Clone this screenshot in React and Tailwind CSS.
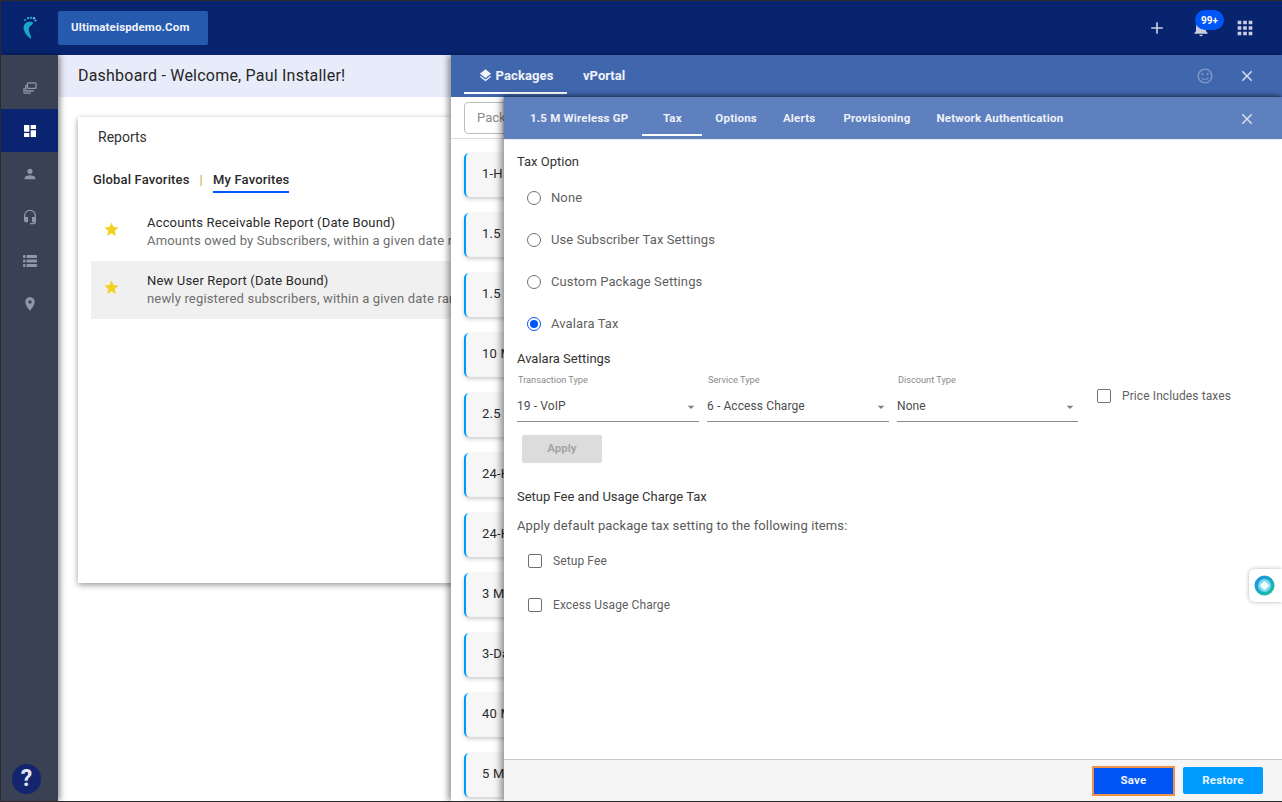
import React from "react";
import { MdDashboard, MdPerson, MdHeadsetMic, MdLocationOn, MdAdd, MdApps, MdNotifications, MdLayers, MdClose, MdOutlineSentimentSatisfiedAlt, MdStar, MdArrowDropDown } from "react-icons/md";

const ff = { fontFamily: "Roboto, sans-serif" };

function Logo() {
  return (
    <svg width="16" height="24" viewBox="0 0 16 24">
      <path d="M6 6 C2 7 1 11 2 14 C3 18 6 21 9 23 C10 20 6 16 7 12 C8 9 11 9 11 7 C11 5.500 8 5.500 6 6 Z" fill="#1aa5c9" />
      <circle cx="3" cy="4" r="1.100" fill="#1aa5c9" />
      <circle cx="6" cy="2.200" r="1.100" fill="#2fb8d8" />
      <circle cx="9" cy="1.800" r="1.100" fill="#2fb8d8" />
      <circle cx="12" cy="2.200" r="1.200" fill="#4fc3e0" />
      <circle cx="13.500" cy="4.500" r="1" fill="#4fc3e0" />
    </svg>
  );
}

function CardsIcon() {
  return (
    <svg width="14" height="12" viewBox="0 0 16 14" fill="none" stroke="#8f97ab" strokeWidth="1.500">
      <rect x="5" y="1" width="10" height="6.500" rx="1" />
      <path d="M5 4 H4 A1 1 0 0 0 3 5 V9.500 A1 1 0 0 0 4 10.500 H11 A1 1 0 0 0 12 9.500" />
      <path d="M1 7 V12 A1 1 0 0 0 2 13 H9" />
    </svg>
  );
}

function ListIcon() {
  return (
    <svg width="14" height="12" viewBox="0 0 14 12" fill="#8f97ab">
      <rect x="0" y="0" width="2.500" height="3" rx="0.800" />
      <rect x="3.500" y="0" width="10.500" height="3" rx="0.800" />
      <rect x="0" y="4.500" width="2.500" height="3" rx="0.800" />
      <rect x="3.500" y="4.500" width="10.500" height="3" rx="0.800" />
      <rect x="0" y="9" width="2.500" height="3" rx="0.800" />
      <rect x="3.500" y="9" width="10.500" height="3" rx="0.800" />
    </svg>
  );
}

function SideItem({ active, children, low }) {
  return (
    <div className={(active ? "h-[43px] flex items-center justify-center bg-[#0a2472]" : "h-[43px] flex items-center justify-center") + (low ? " pt-[2px]" : "")}>
      {children}
    </div>
  );
}

function Radio({ label, checked }) {
  return (
    <div className="h-[42px] flex items-center pl-[10px]">
      <span className={checked ? "w-[14px] h-[14px] rounded-full border-[1.5px] border-[#0055f5] flex items-center justify-center" : "w-[14px] h-[14px] rounded-full border-[1.5px] border-[#6f6f6f]"}>
        {checked && <span className="w-[8px] h-[8px] rounded-full bg-[#0055f5]" />}
      </span>
      <span className="ml-[10px] text-[13px] tracking-[0.1px] text-[#5f5f5f]">{label}</span>
    </div>
  );
}

function Select({ label, value, width }) {
  return (
    <div className="flex flex-col" style={{ width }}>
      <div className="text-[9.2px] leading-[12px] text-[#8a8a8a] pl-px">{label}</div>
      <div className="mt-[4px] h-[32px] flex items-center justify-between border-b border-[#8c8c8c]">
        <span className="text-[12px] tracking-[0.1px] text-[#4d4d4d]">{value}</span>
        <MdArrowDropDown className="text-[#808080] mt-[2px]" size={16} />
      </div>
    </div>
  );
}

function Check({ label, className }) {
  return (
    <div className={"flex items-center " + (className || "")}>
      <span className="w-[14px] h-[14px] rounded-[2px] border-[1.5px] border-[#6f6f6f] shrink-0" />
      <span className="ml-[11px] text-[12px] tracking-[0.1px] text-[#5f5f5f]">{label}</span>
    </div>
  );
}

const packages = ["1-H", "1.5", "1.5", "10 M", "2.5", "24-H", "24-H", "3 M", "3-Da", "40 M", "5 M"];

function Report({ title, sub, hover }) {
  return (
    <div className={hover ? "h-[58px] flex items-center bg-[#f0f0f0] w-[400px] overflow-hidden" : "h-[58px] flex items-center w-[400px] overflow-hidden"}>
      <MdStar className="text-[#f2d21f] ml-[12px] mb-[4px] shrink-0" size={17} />
      <div className="ml-[27px] whitespace-nowrap">
        <div className="text-[13px] leading-[18px] tracking-[0.17px] text-[#2a2a2a]">{title}</div>
        <div className="text-[13px] leading-[18px] tracking-[0.17px] text-[#6e6e6e]">{sub}</div>
      </div>
    </div>
  );
}

export default function App() {
  return (
    <div style={ff} className="relative w-[1282px] h-[802px] overflow-hidden bg-white border-t border-l border-r-0 border-b border-[#2b2b2b] flex flex-col">
      <header className="h-[54px] shrink-0 bg-[#08246f] flex items-center">
        <div className="w-[57px] flex justify-center"><Logo /></div>
        <div className="w-[150px] h-[34px] rounded-[2px] bg-[#255aaf] flex items-center pl-[13px] text-[11.500px] font-bold tracking-[0.15px] text-[#f0f3fa]">Ultimateispdemo.Com</div>
        <div className="ml-auto flex items-center">
          <MdAdd className="text-[#c9cede] mr-[24px]" size={20} />
          <div className="relative w-[20px] h-[20px] mr-[23px]">
            <MdNotifications className="text-[#c9cede]" size={20} />
            <span className="absolute left-[4px] top-[-8px] w-[29px] h-[20px] rounded-full bg-[#0055f5] text-white text-[10px] font-bold flex items-center justify-center">99+</span>
          </div>
          <MdApps className="text-[#c9cede] mr-[26px]" size={22} />
        </div>
      </header>
      <div className="flex flex-1 min-h-0">
        <aside className="relative w-[57px] shrink-0 bg-[#3a4155] pt-[11px] shadow-[2px_0_6px_rgba(0,0,0,0.45)] z-10">
          <SideItem><CardsIcon /></SideItem>
          <SideItem active><MdDashboard className="text-white" size={16} /></SideItem>
          <SideItem><MdPerson className="text-[#8f97ab]" size={16} /></SideItem>
          <SideItem><MdHeadsetMic className="text-[#8f97ab]" size={16} /></SideItem>
          <SideItem low><ListIcon /></SideItem>
          <SideItem low><MdLocationOn className="text-[#8f97ab]" size={16} /></SideItem>
          <div className="absolute left-[11px] bottom-[7px] w-[29px] h-[30px] rounded-full bg-[#12256e] flex items-center justify-center text-[23px] font-bold text-[#e3e7f3]">?</div>
        </aside>
        <main className="flex-1 min-w-0">
          <div className="h-[42px] bg-[#e8ecfa] flex items-center pl-[20px] text-[16px] tracking-[0.21px] text-[#262626]">Dashboard - Welcome, Paul Installer!</div>
          <div className="ml-[20px] mt-[20px] w-[450px] h-[466px] bg-white shadow-[0_2px_6px_rgba(0,0,0,0.4)] pl-[13px]">
            <div className="pl-[7px] pt-[12px] text-[14px] leading-[16px] text-[#333]">Reports</div>
            <div className="mt-[25px] flex items-start text-[13px] font-medium tracking-[0.17px] text-[#2a2a2a] pl-[2px]">
              <span>Global Favorites</span>
              <span className="mx-[10px] font-normal text-[#d9a441]">|</span>
              <span className="border-b-2 border-[#0055f5] pb-[1px]">My Favorites</span>
            </div>
            <div className="mt-[10px]">
              <Report title="Accounts Receivable Report (Date Bound)" sub="Amounts owed by Subscribers, within a given date range" />
              <Report hover title="New User Report (Date Bound)" sub="newly registered subscribers, within a given date range" />
            </div>
          </div>
        </main>
      </div>

      <section className="absolute left-[450px] top-[54px] right-0 bottom-0 bg-white shadow-[-3px_0_6px_rgba(0,0,0,0.4)] flex flex-col">
        <div className="h-[42px] shrink-0 bg-[#4066ad] flex items-center pl-[13px] pr-[26px]">
          <div className="w-[103px] h-[39px] pt-[4px] border-b-2 border-white flex items-center justify-center text-[13px] font-bold tracking-[0.1px] text-[#f0f3fa] self-start">
            <MdLayers size={15} className="mr-[3px]" />Packages
          </div>
          <div className="ml-[16px] text-[13px] font-bold text-[#f0f3fa]">vPortal</div>
          <MdOutlineSentimentSatisfiedAlt className="ml-auto text-[#7f96c6] mr-[24px]" size={18} />
          <MdClose className="text-[#d6dcea]" size={18} />
        </div>
        <div className="h-[42px] shrink-0 border-b border-[#dcdcdc] pl-[13px] pt-[5px]">
          <div className="w-[200px] h-[32px] rounded-[4px] border border-[#bdbdbd] flex items-center pl-[12px] text-[13px] text-[#8a8a8a]">Packages</div>
        </div>
        <div className="pl-[13px] pt-[14px] flex flex-col gap-[16px]">
          {packages.map((p, i) => (
            <div key={i} className="w-[200px] h-[44px] shrink-0 rounded-[5px] border-l-2 border-[#0099ff] bg-[#f6f6f6] shadow-[0_2px_4px_rgba(0,0,0,0.2)] flex items-center pl-[16px] pb-[2px] text-[13px] tracking-[0.2px] text-[#2a2a2a]">{p}</div>
          ))}
        </div>
      </section>

      <section className="absolute left-[503px] top-[96px] right-0 bottom-0 bg-white shadow-[-3px_0_7px_rgba(0,0,0,0.45)] flex flex-col">
        <div className="h-[42px] shrink-0 bg-[#5f80bf] flex items-center pt-[2px] text-[11.500px] font-bold tracking-[0.2px] text-[#eef1f8] pr-[26px] shadow-[0_-1px_3px_rgba(0,0,0,0.4)]">
          <span className="ml-[26px]">1.5 M Wireless GP</span>
          <span className="ml-[14px] w-[60px] self-start -mt-[2px] h-[39px] pt-[7px] border-b-2 border-white flex items-center justify-center">Tax</span>
          <span className="ml-[13px]">Options</span>
          <span className="ml-[26px]">Alerts</span>
          <span className="ml-[28px]">Provisioning</span>
          <span className="ml-[26px]">Network Authentication</span>
          <MdClose className="ml-auto text-[#d6dcea]" size={18} />
        </div>
        <div className="flex-1 min-h-0 pl-[13px] pt-[15px]">
          <div className="text-[13px] leading-[16px] text-[#333]">Tax Option</div>
          <div className="mt-[7px]">
            <Radio label="None" />
            <Radio label="Use Subscriber Tax Settings" />
            <Radio label="Custom Package Settings" />
            <Radio label="Avalara Tax" checked />
          </div>
          <div className="mt-[6px] text-[13px] leading-[16px] text-[#333]">Avalara Settings</div>
          <div className="mt-[7px] flex items-start">
            <Select label="Transaction Type" value="19 - VoIP" width={182} />
            <div className="w-[8px]" />
            <Select label="Service Type" value="6 - Access Charge" width={182} />
            <div className="w-[8px]" />
            <Select label="Discount Type" value="None" width={181} />
            <Check className="ml-[19px] mt-[13px]" label="Price Includes taxes" />
          </div>
          <div className="ml-[5px] mt-[13px] w-[80px] h-[28px] rounded-[2px] bg-[#dcdcdc] flex items-center justify-center text-[11.500px] font-bold text-[#a5a5a5]">Apply</div>
          <div className="mt-[26px] text-[13px] leading-[16px] text-[#333]">Setup Fee and Usage Charge Tax</div>
          <div className="mt-[13px] text-[13px] leading-[16px] tracking-[0.12px] text-[#5a5a5a]">Apply default package tax setting to the following items:</div>
          <Check className="ml-[11px] mt-[20px] h-[14px]" label="Setup Fee" />
          <Check className="ml-[11px] mt-[30px] h-[14px]" label="Excess Usage Charge" />
        </div>
        <div className="h-[42px] shrink-0 bg-[#f5f5f5] border-t border-[#c8c8c8] flex items-center justify-end pr-[19px]">
          <div className="w-[83px] h-[30px] bg-[#0055f5] border-2 border-[#f0914a] flex items-center justify-center text-[11.500px] font-bold tracking-[0.2px] text-[#eef3fd]">Save</div>
          <div className="ml-[8px] w-[80px] h-[27px] rounded-[2px] bg-[#009bff] flex items-center justify-center text-[11.500px] font-bold tracking-[0.2px] text-[#eaf6ff]">Restore</div>
        </div>
      </section>

      <div className="absolute right-0 top-[568px] w-[33px] h-[33px] rounded-l-[6px] bg-white shadow-[0_0_4px_rgba(0,0,0,0.3)] flex items-center justify-center pr-[2px]">
        <svg width="21" height="21" viewBox="0 0 21 21">
          <defs>
            <linearGradient id="g" x1="0" y1="0" x2="1" y2="1">
              <stop offset="0" stopColor="#1d8df2" />
              <stop offset="1" stopColor="#14c98f" />
            </linearGradient>
          </defs>
          <circle cx="10.500" cy="10.500" r="10" fill="url(#g)" />
          <circle cx="10.500" cy="10.500" r="6.500" fill="#7fd8f0" />
          <rect x="7" y="7" width="7" height="7" rx="1.200" transform="rotate(45 10.500 10.500)" fill="#f2fdfc" />
        </svg>
      </div>
    </div>
  );
}
